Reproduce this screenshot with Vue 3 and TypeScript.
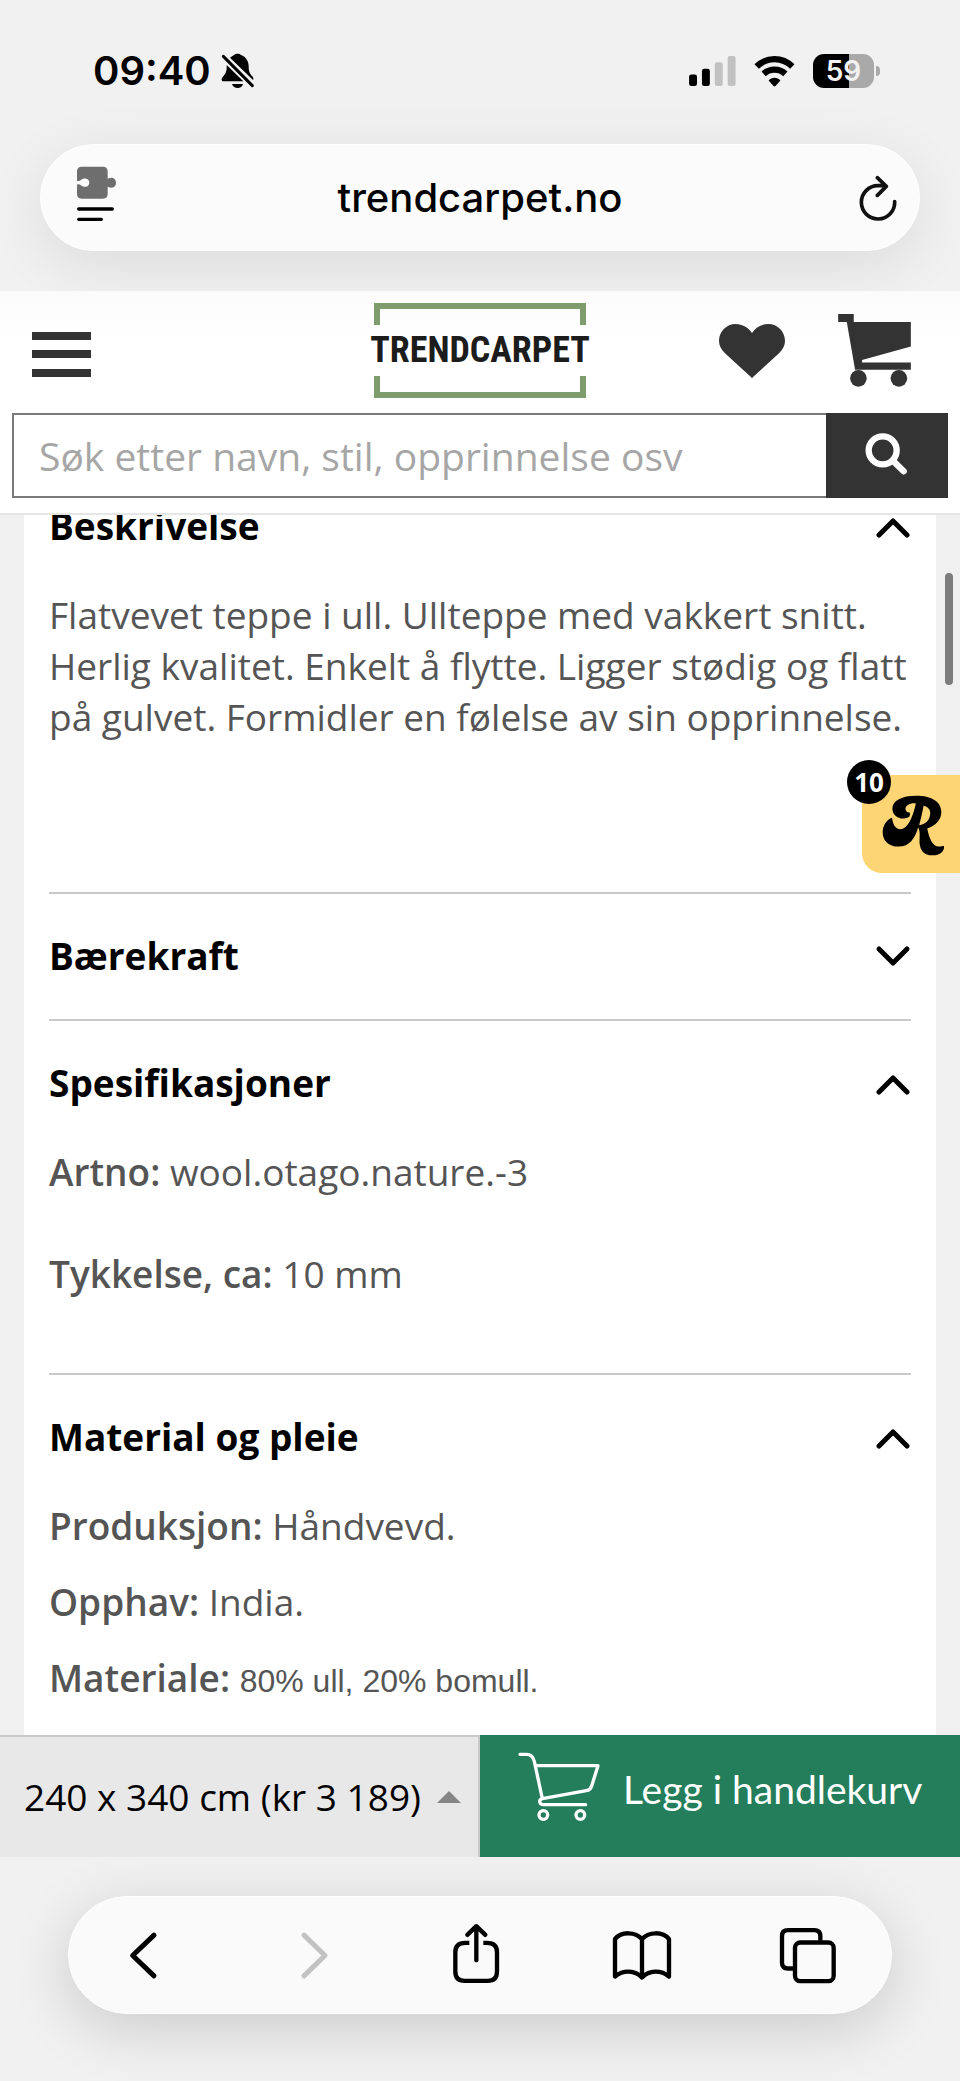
<script setup lang="ts">
import { ref } from 'vue'

interface Row {
  label?: string
  text: string
  small?: boolean
}

interface Section {
  id: string
  title: string
  open: boolean
  rows: Row[]
}

const sections = ref<Section[]>([
  {
    id: 'beskrivelse',
    title: 'Beskrivelse',
    open: true,
    rows: [
      {
        text: 'Flatvevet teppe i ull. Ullteppe med vakkert snitt. Herlig kvalitet. Enkelt å flytte. Ligger stødig og flatt på gulvet. Formidler en følelse av sin opprinnelse.',
      },
    ],
  },
  { id: 'baerekraft', title: 'Bærekraft', open: false, rows: [] },
  {
    id: 'spesifikasjoner',
    title: 'Spesifikasjoner',
    open: true,
    rows: [
      { label: 'Artno:', text: 'wool.otago.nature.-3' },
      { label: 'Tykkelse, ca:', text: '10 mm' },
    ],
  },
  {
    id: 'material',
    title: 'Material og pleie',
    open: true,
    rows: [
      { label: 'Produksjon:', text: 'Håndvevd.' },
      { label: 'Opphav:', text: 'India.' },
      { label: 'Materiale:', text: '80% ull, 20% bomull.', small: true },
    ],
  },
])

const query = ref('')
const size = ref('240x340')
</script>

<template>
  <div class="screen">
    <div class="browser-top">
      <div class="status">
        <div class="status-left">
          <span class="clock">09:40</span>
          <svg class="bell" viewBox="664 162 102 108" aria-hidden="true">
            <path d="M691 176 C697 172 701 170 703 168 C708 163 719 163 724 168 C739 174 747 186 747 202 C747 219 751 225 758 232 C762 237 762 241 760 243 Z" />
            <path d="M681 198 L731 247 H672 C665 247 664 240 669 234 C677 225 682 219 681 198 Z" />
            <path d="M697 255 H730 C727 271 701 271 697 255 Z" />
            <path d="M671 172 L758 260" class="slash" />
          </svg>
        </div>
        <div class="status-right">
          <svg class="signal" viewBox="627 168 142 91" aria-hidden="true">
            <rect x="627" y="224" width="24" height="35" rx="7" />
            <rect x="666" y="207" width="24" height="52" rx="7" />
            <rect x="705" y="187" width="24" height="72" rx="7" class="off" />
            <rect x="744" y="168" width="24" height="91" rx="7" class="off" />
          </svg>
          <svg class="wifi" viewBox="822 166 124 94" aria-hidden="true">
            <path d="M830 198 C860 168 908 168 938 198" class="arc" />
            <path d="M851 220 C870 203 898 203 917 220" class="arc" />
            <path d="M866 240 C876 229 892 229 902 240 L887 257 Q884 260 881 257 Z" />
          </svg>
          <span class="battery"><span class="battery-body">59</span><span class="battery-nub"></span></span>
        </div>
      </div>

      <div class="address">
        <button type="button" class="plain sidebar" aria-label="Sidemeny">
          <svg class="reader" viewBox="231 496 117 168" aria-hidden="true">
            <path fill="#6e6e6e" d="M245 498 H309 Q323 498 323 512 V534 C340 526 348 536 348 546 C348 556 340 566 323 558 V580 Q323 594 309 594 H245 Q231 594 231 580 V552 C233 551 238 550 242 553 C250 562 268 560 268 546 C268 532 250 530 242 539 C238 542 233 541 231 540 V512 Q231 498 245 498 Z" />
            <path class="bar" d="M236 625 H337 M236 656 H304" />
          </svg>
        </button>
        <span class="url">trendcarpet.no</span>
        <button type="button" class="plain refresh" aria-label="Last inn på nytt">
          <svg class="reload" viewBox="1134 519 114 138" aria-hidden="true">
            <path d="M1241 599 A50 50 0 1 1 1191 551 H1212 M1189 527 L1216 553 L1189 580" />
          </svg>
        </button>
      </div>
    </div>

    <header class="shop">
      <div class="shop-row">
        <button type="button" class="plain menu" aria-label="Meny">
          <svg class="burger" viewBox="0 0 59 45" aria-hidden="true">
            <path d="M0 0 H59 V8 H0 Z M0 18 H59 V26 H0 Z M0 37 H59 V45 H0 Z" />
          </svg>
        </button>
        <a href="#" class="logo">TRENDCARPET</a>
        <div class="actions">
          <a href="#" aria-label="Favoritter">
            <svg class="heart" viewBox="718 133 198 162" aria-hidden="true">
              <path d="M817 295 L736 221 C724 209 718 197 718 184 C718 156 740 133 768 133 C788 133 806 144 817 160 C828 144 845 133 866 133 C894 133 916 156 916 184 C916 197 910 209 898 221 Z" />
            </svg>
          </a>
          <a href="#" aria-label="Handlekurv">
            <svg class="cart" viewBox="1074 105 219 220" aria-hidden="true">
              <path d="M1074 105 H1121 V129 H1293 V203 L1146 244 V251 H1293 V273 H1125 L1100 129 H1074 Z" />
              <circle cx="1135" cy="299" r="25" />
              <circle cx="1257" cy="299" r="25" />
            </svg>
          </a>
        </div>
      </div>
      <form class="search" @submit.prevent>
        <input v-model="query" type="text" aria-label="Søk" placeholder="Søk etter navn, stil, opprinnelse osv" />
        <button type="submit" aria-label="Søk">
          <svg class="glass" viewBox="1156 460 124 126" aria-hidden="true">
            <circle cx="1208" cy="512" r="42" />
            <path d="M1242 546 L1271 575" />
          </svg>
        </button>
      </form>
    </header>

    <main class="content">
      <div class="card">
        <section v-for="s in sections" :key="s.id" class="section" :class="s.id">
          <h2>
            <button type="button" class="toggle" :aria-expanded="s.open" @click="s.open = !s.open">
              <span>{{ s.title }}</span>
              <svg class="chevron" viewBox="0 0 36 24" aria-hidden="true">
                <path :d="s.open ? 'M4 21 L18 7 L32 21' : 'M4 5 L18 19 L32 5'" />
              </svg>
            </button>
          </h2>
          <div v-if="s.open && s.rows.length" class="rows">
            <p v-for="r in s.rows" :key="r.text">
              <template v-if="r.label"><b>{{ r.label }}</b>{{ ' ' }}</template><span :class="{ small: r.small }">{{ r.text }}</span>
            </p>
          </div>
        </section>
      </div>

      <div class="thumb"></div>
      <button type="button" class="rewards" aria-label="Belønninger">
        <svg class="mark" viewBox="303 284 188 182" aria-hidden="true">
          <path
            fill-rule="evenodd"
            d="M383 350 C360 362 334 348 334 325 C334 300 362 286 405 286 C450 286 480 303 480 335 C480 358 464 375 438 384 C444 415 455 438 472 438 C480 438 484 436 488 436 C490 452 476 464 454 464 C425 464 413 445 415 415 C416 400 416 390 411 380 C402 412 386 438 352 438 C322 438 305 420 305 395 C305 375 318 357 333 352 C335 372 343 386 358 386 C382 384 396 345 404 309 C390 306 372 314 373 326 C374 334 380 338 386 336 C387 344 386 348 383 350 Z M427 316 C442 319 450 330 446 346 C443 362 430 372 414 374 C420 350 424 335 427 316 Z"
          />
        </svg>
        <span class="count">10</span>
      </button>
    </main>

    <div class="buy">
      <label class="size">
        <select v-model="size" aria-label="Størrelse">
          <option value="240x340">240 x 340 cm (kr 3 189)</option>
        </select>
        <svg class="tri" viewBox="0 0 24 12" aria-hidden="true"><path d="M0 12 L12 0 L24 12 Z" /></svg>
      </label>
      <button type="button" class="add">
        <svg class="trolley" viewBox="113 122 246 210" aria-hidden="true">
          <path d="M119 129 H138 C153 129 159 137 162 150 L186 262 C174 265 176 280 190 280 H316 M166 163 H353 L334 224 Q330 236 318 238 L186 262" />
          <circle cx="189" cy="311" r="13" />
          <circle cx="300" cy="311" r="13" />
        </svg>
        <span>Legg i handlekurv</span>
      </button>
    </div>

    <div class="browser-bottom">
      <nav class="toolbar" aria-label="Nettleser">
        <button type="button" class="plain" aria-label="Tilbake">
          <svg viewBox="339 182 180 200" aria-hidden="true"><path d="M462 221 L398 282 L462 343" class="thick" /></svg>
        </button>
        <button type="button" class="plain" aria-label="Frem" disabled>
          <svg viewBox="838 182 180 200" aria-hidden="true"><path d="M913 221 L976 282 L913 343" class="thick faint" /></svg>
        </button>
        <button type="button" class="plain" aria-label="Del">
          <svg viewBox="1337 182 180 200" aria-hidden="true">
            <path d="M1407 244 H1395 Q1365 244 1365 272 V330 Q1365 358 1393 358 H1462 Q1490 358 1490 330 V272 Q1490 244 1460 244 H1449" />
            <path d="M1428 296 V195 M1401 220 L1428 194 L1455 220" class="round" />
          </svg>
        </button>
        <button type="button" class="plain" aria-label="Bokmerker">
          <svg viewBox="397 182 180 200" aria-hidden="true">
            <path class="round" d="M487 233 C468 210 424 209 406 233 V345 C430 325 466 325 487 348 C508 325 544 325 568 345 V233 C550 209 506 210 487 233 V348" />
          </svg>
        </button>
        <button type="button" class="plain" aria-label="Faner">
          <svg viewBox="895 182 180 200" aria-hidden="true">
            <rect x="946" y="243" width="116" height="116" rx="16" />
            <path d="M941 321 H925 Q907 321 907 303 V224 Q907 206 925 206 H1004 Q1022 206 1022 224 V238" />
          </svg>
        </button>
      </nav>
    </div>
  </div>
</template>

<style>
body {
  margin: 0;
  background: #f1f1f1;
}
</style>

<style scoped>
.screen {
  display: flex;
  flex-direction: column;
  min-height: 100vh;
  background: #f1f1f1;
  font-family: "Open Sans", "Noto Sans", sans-serif;
  color: #000;
}

svg {
  display: block;
  flex: none;
}

.plain {
  padding: 0;
  border: 0;
  background: none;
  color: inherit;
}

/* Browser chrome, top */
.browser-top {
  padding: 46px 40px 40px;
  overflow: hidden;
  font-family: Inter, "Liberation Sans", sans-serif;
}

.status {
  display: flex;
  justify-content: space-between;
  align-items: center;
  height: 50px;
  padding: 0 40px 0 53px;
}

.status-left,
.status-right {
  display: flex;
  align-items: center;
}

.status-left {
  gap: 10px;
}

.status-right {
  gap: 18px;
}

.clock {
  font-size: 40px;
  font-weight: 600;
  line-height: 50px;
}

.bell {
  width: 34px;
  height: 36px;
}

.slash {
  fill: none;
  stroke: #000;
  stroke-width: 9;
  stroke-linecap: round;
}

.signal {
  width: 47px;
  height: 30px;
}

.off {
  fill: #c1c1c1;
}

.wifi {
  width: 41px;
  height: 31px;
}

.arc {
  fill: none;
  stroke: #000;
  stroke-width: 19;
}

.battery {
  display: flex;
  align-items: center;
  gap: 2px;
}

.battery-body {
  width: 61px;
  height: 34px;
  border-radius: 11px;
  background: linear-gradient(90deg, #000 59%, #a9a9a9 59%);
  color: #f2f2f2;
  font-size: 28px;
  font-weight: 600;
  line-height: 34px;
  text-align: center;
}

.battery-nub {
  width: 4px;
  height: 10px;
  border-radius: 0 5px 5px 0;
  background: #a9a9a9;
}

.address {
  display: grid;
  grid-template-columns: 1fr auto 1fr;
  align-items: center;
  box-sizing: border-box;
  height: 107px;
  margin-top: 48px;
  padding: 0 22px;
  border: 1px solid #fff;
  border-radius: 54px;
  background: #fbfbfb;
  box-shadow: 0 14px 60px rgba(0, 0, 0, 0.09);
}

.sidebar {
  justify-self: start;
  padding: 0 0 8px 14px;
}

.refresh {
  justify-self: end;
}

.reader {
  width: 39px;
  height: 56px;
}

.bar {
  fill: none;
  stroke: #000;
  stroke-width: 10;
  stroke-linecap: round;
}

.url {
  font-size: 40px;
  font-weight: 500;
  line-height: 50px;
}

.reload {
  width: 38px;
  height: 46px;
  fill: none;
  stroke: #111;
  stroke-width: 11;
  stroke-linecap: round;
  stroke-linejoin: round;
}

/* Shop header */
.shop {
  padding: 12px 12px 15px;
  border-bottom: 2px solid #e6e6e6;
  background: linear-gradient(#fbfbfb, #fff 50px);
}

.shop-row {
  display: grid;
  grid-template-columns: 1fr auto 1fr;
  align-items: center;
  height: 95px;
  margin-bottom: 15px;
  padding: 0 37px 0 20px;
}

.menu {
  justify-self: start;
  padding-top: 7px;
}

.burger {
  width: 59px;
  height: 45px;
  fill: #333;
}

.logo {
  position: relative;
  box-sizing: border-box;
  height: 95px;
  margin-left: 17px;
  color: #1c1c1c;
  font-family: "Roboto Condensed", "Liberation Sans Narrow", "DejaVu Sans Condensed", sans-serif;
  font-size: 36px;
  font-weight: 700;
  line-height: 95px;
  text-decoration: none;
}

.logo::before,
.logo::after {
  content: "";
  position: absolute;
  right: 4px;
  left: 4px;
  box-sizing: border-box;
  height: 22px;
  border: 6px solid #7f9c6e;
}

.logo::before {
  top: 0;
  border-bottom: 0;
}

.logo::after {
  bottom: 0;
  border-top: 0;
}

.actions {
  display: flex;
  align-items: center;
  justify-content: flex-end;
  gap: 53px;
}

.heart {
  width: 66px;
  height: 54px;
  fill: #333;
}

.cart {
  width: 73px;
  height: 73px;
  fill: #333;
}

.search {
  display: flex;
  height: 85px;
}

.search input {
  flex: 1;
  min-width: 0;
  box-sizing: border-box;
  padding: 0 25px;
  border: 2px solid #7a7a7a;
  border-right: 0;
  border-radius: 0;
  background: #fff;
  color: #333;
  font: 400 39px "Open Sans", "Noto Sans", sans-serif;
}

.search input::placeholder {
  color: #a6a6a6;
  opacity: 1;
}

.search button {
  display: flex;
  align-items: center;
  justify-content: center;
  width: 122px;
  padding: 0 3px 4px 0;
  border: 0;
  background: #333;
}

.glass {
  width: 42px;
  height: 42px;
  fill: none;
  stroke: #fff;
  stroke-width: 19;
  stroke-linecap: round;
}

/* Product details */
.content {
  position: relative;
  flex: 1;
  overflow: hidden;
  padding: 0 24px;
  background: #f0f0f0;
}

.card {
  box-sizing: border-box;
  min-height: 100%;
  margin-top: -14px;
  padding: 0 25px;
  background: #fff;
}

.section {
  padding-top: 37px;
  border-top: 2px solid #c9c9c9;
}

.section:first-child {
  padding-top: 0;
  border-top: 0;
}

h2 {
  margin: 0;
  padding-bottom: 38px;
}

.toggle {
  display: flex;
  align-items: center;
  justify-content: space-between;
  width: 100%;
  padding: 0;
  border: 0;
  background: none;
  color: #000;
  font: 700 37px/50px "Open Sans", "Noto Sans", sans-serif;
  text-align: left;
}

.chevron {
  width: 36px;
  height: 24px;
  fill: none;
  stroke: #000;
  stroke-width: 5;
  stroke-linecap: round;
  stroke-linejoin: round;
}

.rows {
  display: flex;
  flex-direction: column;
  gap: 25px;
  padding-bottom: 74px;
  color: #555;
  font-size: 37px;
  line-height: 51px;
}

.beskrivelse .rows {
  padding-bottom: 150px;
}

.spesifikasjoner .rows {
  gap: 51px;
}

.material .rows {
  padding-bottom: 28px;
}

p {
  margin: 0;
}

b {
  font-weight: 600;
}

.small {
  font-family: "Liberation Sans", Arial, sans-serif;
  font-size: 32px;
}

.thumb {
  position: absolute;
  top: 58px;
  right: 7px;
  width: 8px;
  height: 112px;
  border-radius: 4px;
  background: #7d7d7d;
}

.rewards {
  position: absolute;
  top: 260px;
  right: 0;
  display: flex;
  align-items: center;
  justify-content: center;
  width: 98px;
  height: 98px;
  padding: 3px 0 0 5px;
  border: 0;
  border-radius: 0 0 0 20px;
  background: #fed574;
}

.mark {
  width: 63px;
  height: 61px;
}

.count {
  position: absolute;
  top: -15px;
  left: -15px;
  width: 44px;
  height: 44px;
  border-radius: 50%;
  background: #000;
  color: #fff;
  font: 700 26px/44px "Open Sans", "Noto Sans", sans-serif;
  text-align: center;
}

/* Purchase bar */
.buy {
  display: grid;
  grid-template-columns: 1fr 1fr;
  height: 122px;
}

.size {
  display: flex;
  align-items: center;
  gap: 16px;
  padding-left: 24px;
  border-top: 2px solid #c9c9c9;
  border-right: 2px solid #c9c9c9;
  background: #e8e8e8;
}

select {
  appearance: none;
  padding: 0;
  border: 0;
  background: none;
  color: #000;
  font: 400 37px/50px "Open Sans", "Noto Sans", sans-serif;
}

.tri {
  width: 24px;
  height: 12px;
  fill: #858585;
}

.add {
  display: flex;
  align-items: flex-start;
  gap: 23px;
  padding: 17px 0 0 38px;
  border: 0;
  background: #247e5c;
  color: #fff;
  font: 400 39px/50px Lato, "Open Sans", sans-serif;
}

.add span {
  padding-top: 12px;
}

.trolley {
  width: 82px;
  height: 70px;
  fill: none;
  stroke: #fff;
  stroke-width: 10;
  stroke-linecap: round;
  stroke-linejoin: round;
}

/* Browser chrome, bottom */
.browser-bottom {
  padding: 39px 68px 68px;
  overflow: hidden;
}

.toolbar {
  display: flex;
  align-items: center;
  justify-content: space-between;
  box-sizing: border-box;
  height: 118px;
  padding: 0 53px 0 44px;
  border: 1px solid #fff;
  border-radius: 59px;
  background: #fafafa;
  box-shadow: 0 14px 60px rgba(0, 0, 0, 0.16);
}

.toolbar svg {
  width: 60px;
  height: 67px;
  fill: none;
  stroke: #000;
  stroke-width: 13;
}

.toolbar .thick {
  stroke-width: 15;
  stroke-linecap: round;
  stroke-linejoin: round;
}

.toolbar .faint {
  stroke: #c2c2c2;
}

.toolbar .round {
  stroke-linecap: round;
  stroke-linejoin: round;
}
</style>
